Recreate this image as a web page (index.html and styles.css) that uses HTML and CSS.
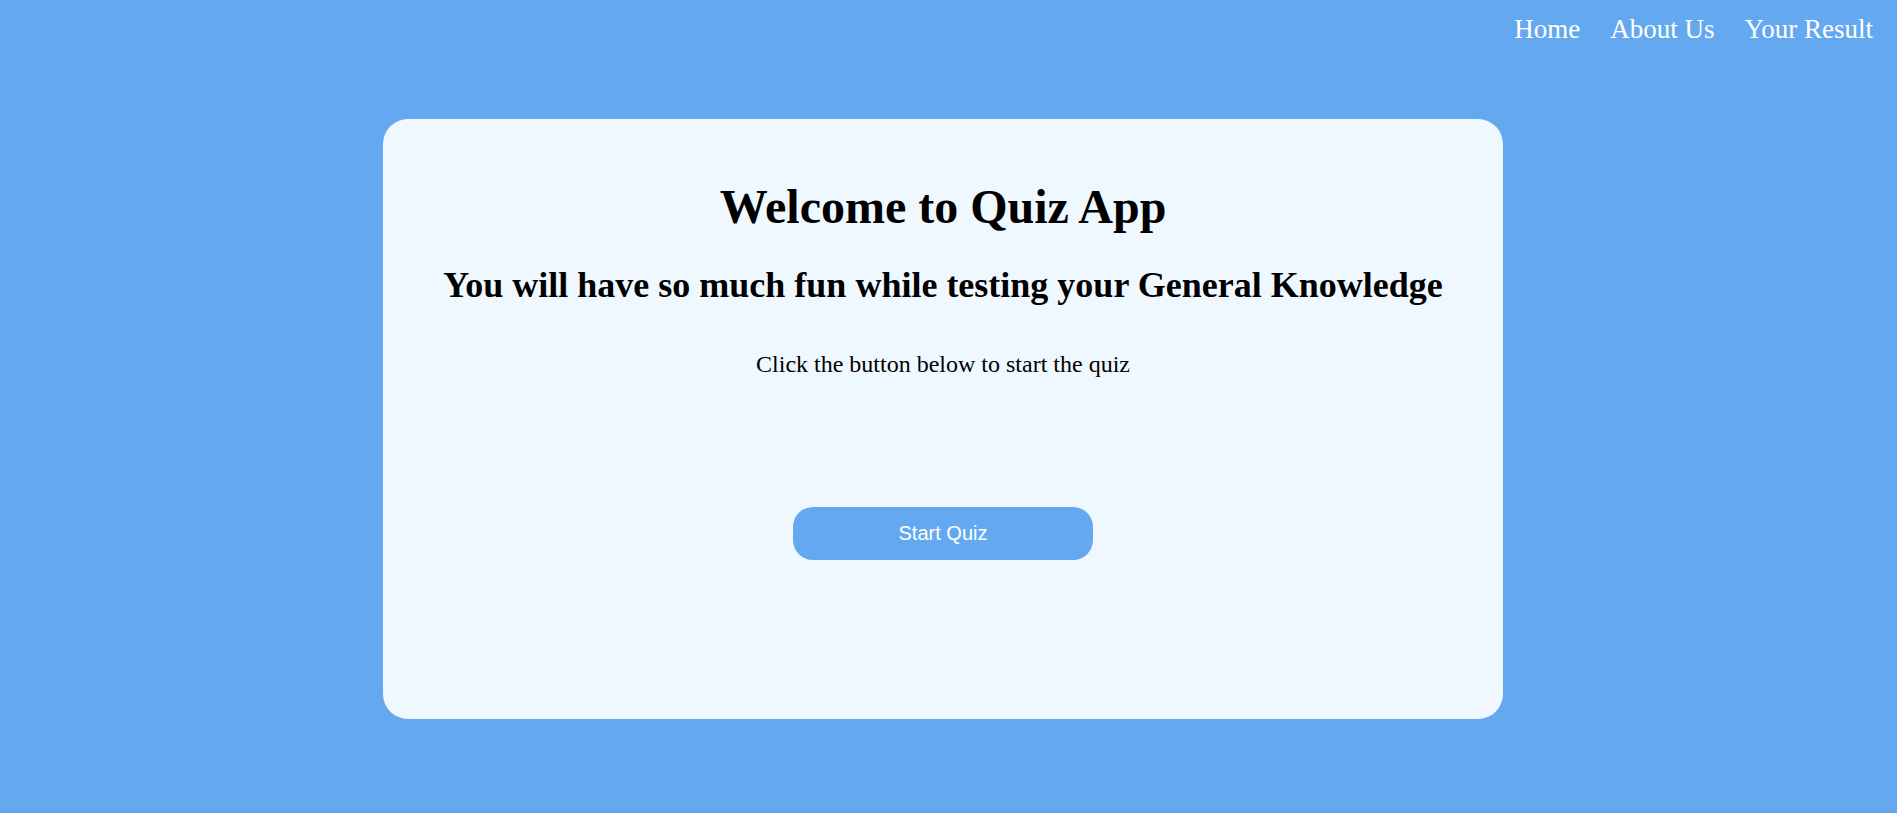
FILE: index.html
```html
<!DOCTYPE html>
<html lang="en">
<head>
<meta charset="utf-8">
<title>Quiz App</title>
<link rel="stylesheet" href="styles.css">
</head>
<body>
  <nav class="nav">
    <a class="nav-link" href="#">Home</a>
    <a class="nav-link" href="#">About Us</a>
    <a class="nav-link" href="#">Your Result</a>
  </nav>
  <main class="card">
    <h1 class="title">Welcome to Quiz App</h1>
    <h2 class="subtitle">You will have so much fun while testing your General Knowledge</h2>
    <p class="hint">Click the button below to start the quiz</p>
    <button class="start-btn" type="button">Start Quiz</button>
  </main>
</body>
</html>
```

FILE: styles.css
```css
* { box-sizing: border-box; }

html, body {
  margin: 0;
  padding: 0;
}

body {
  background: #64a9f0;
  font-family: "Liberation Serif", "Times New Roman", serif;
  color: #000;
  height: 813px;
  overflow: hidden;
}

.nav {
  display: flex;
  justify-content: flex-end;
  gap: 30px;
  padding: 14px 24px 0 0;
}

.nav-link {
  color: #fff;
  text-decoration: none;
  font-size: 27px;
  line-height: 30px;
}

.card {
  width: 1120px;
  height: 600px;
  margin: 75px 0 0 383px;
  background: #f0f8ff;
  border-radius: 25px;
  padding-top: 60px;
  display: flex;
  flex-direction: column;
  align-items: center;
  text-align: center;
}

.title {
  margin: 0;
  font-size: 48px;
  line-height: 56px;
  font-weight: bold;
}

.subtitle {
  margin: 30px 0 0;
  font-size: 36px;
  line-height: 40px;
  font-weight: bold;
}

.hint {
  margin: 45px 0 0;
  font-size: 24px;
  line-height: 28px;
}

.start-btn {
  margin-top: 129px;
  width: 300px;
  height: 53px;
  border: none;
  border-radius: 20px;
  background: #64a9f0;
  color: #fff;
  font-family: "Liberation Sans", Arial, sans-serif;
  font-size: 20px;
  cursor: pointer;
}
```
